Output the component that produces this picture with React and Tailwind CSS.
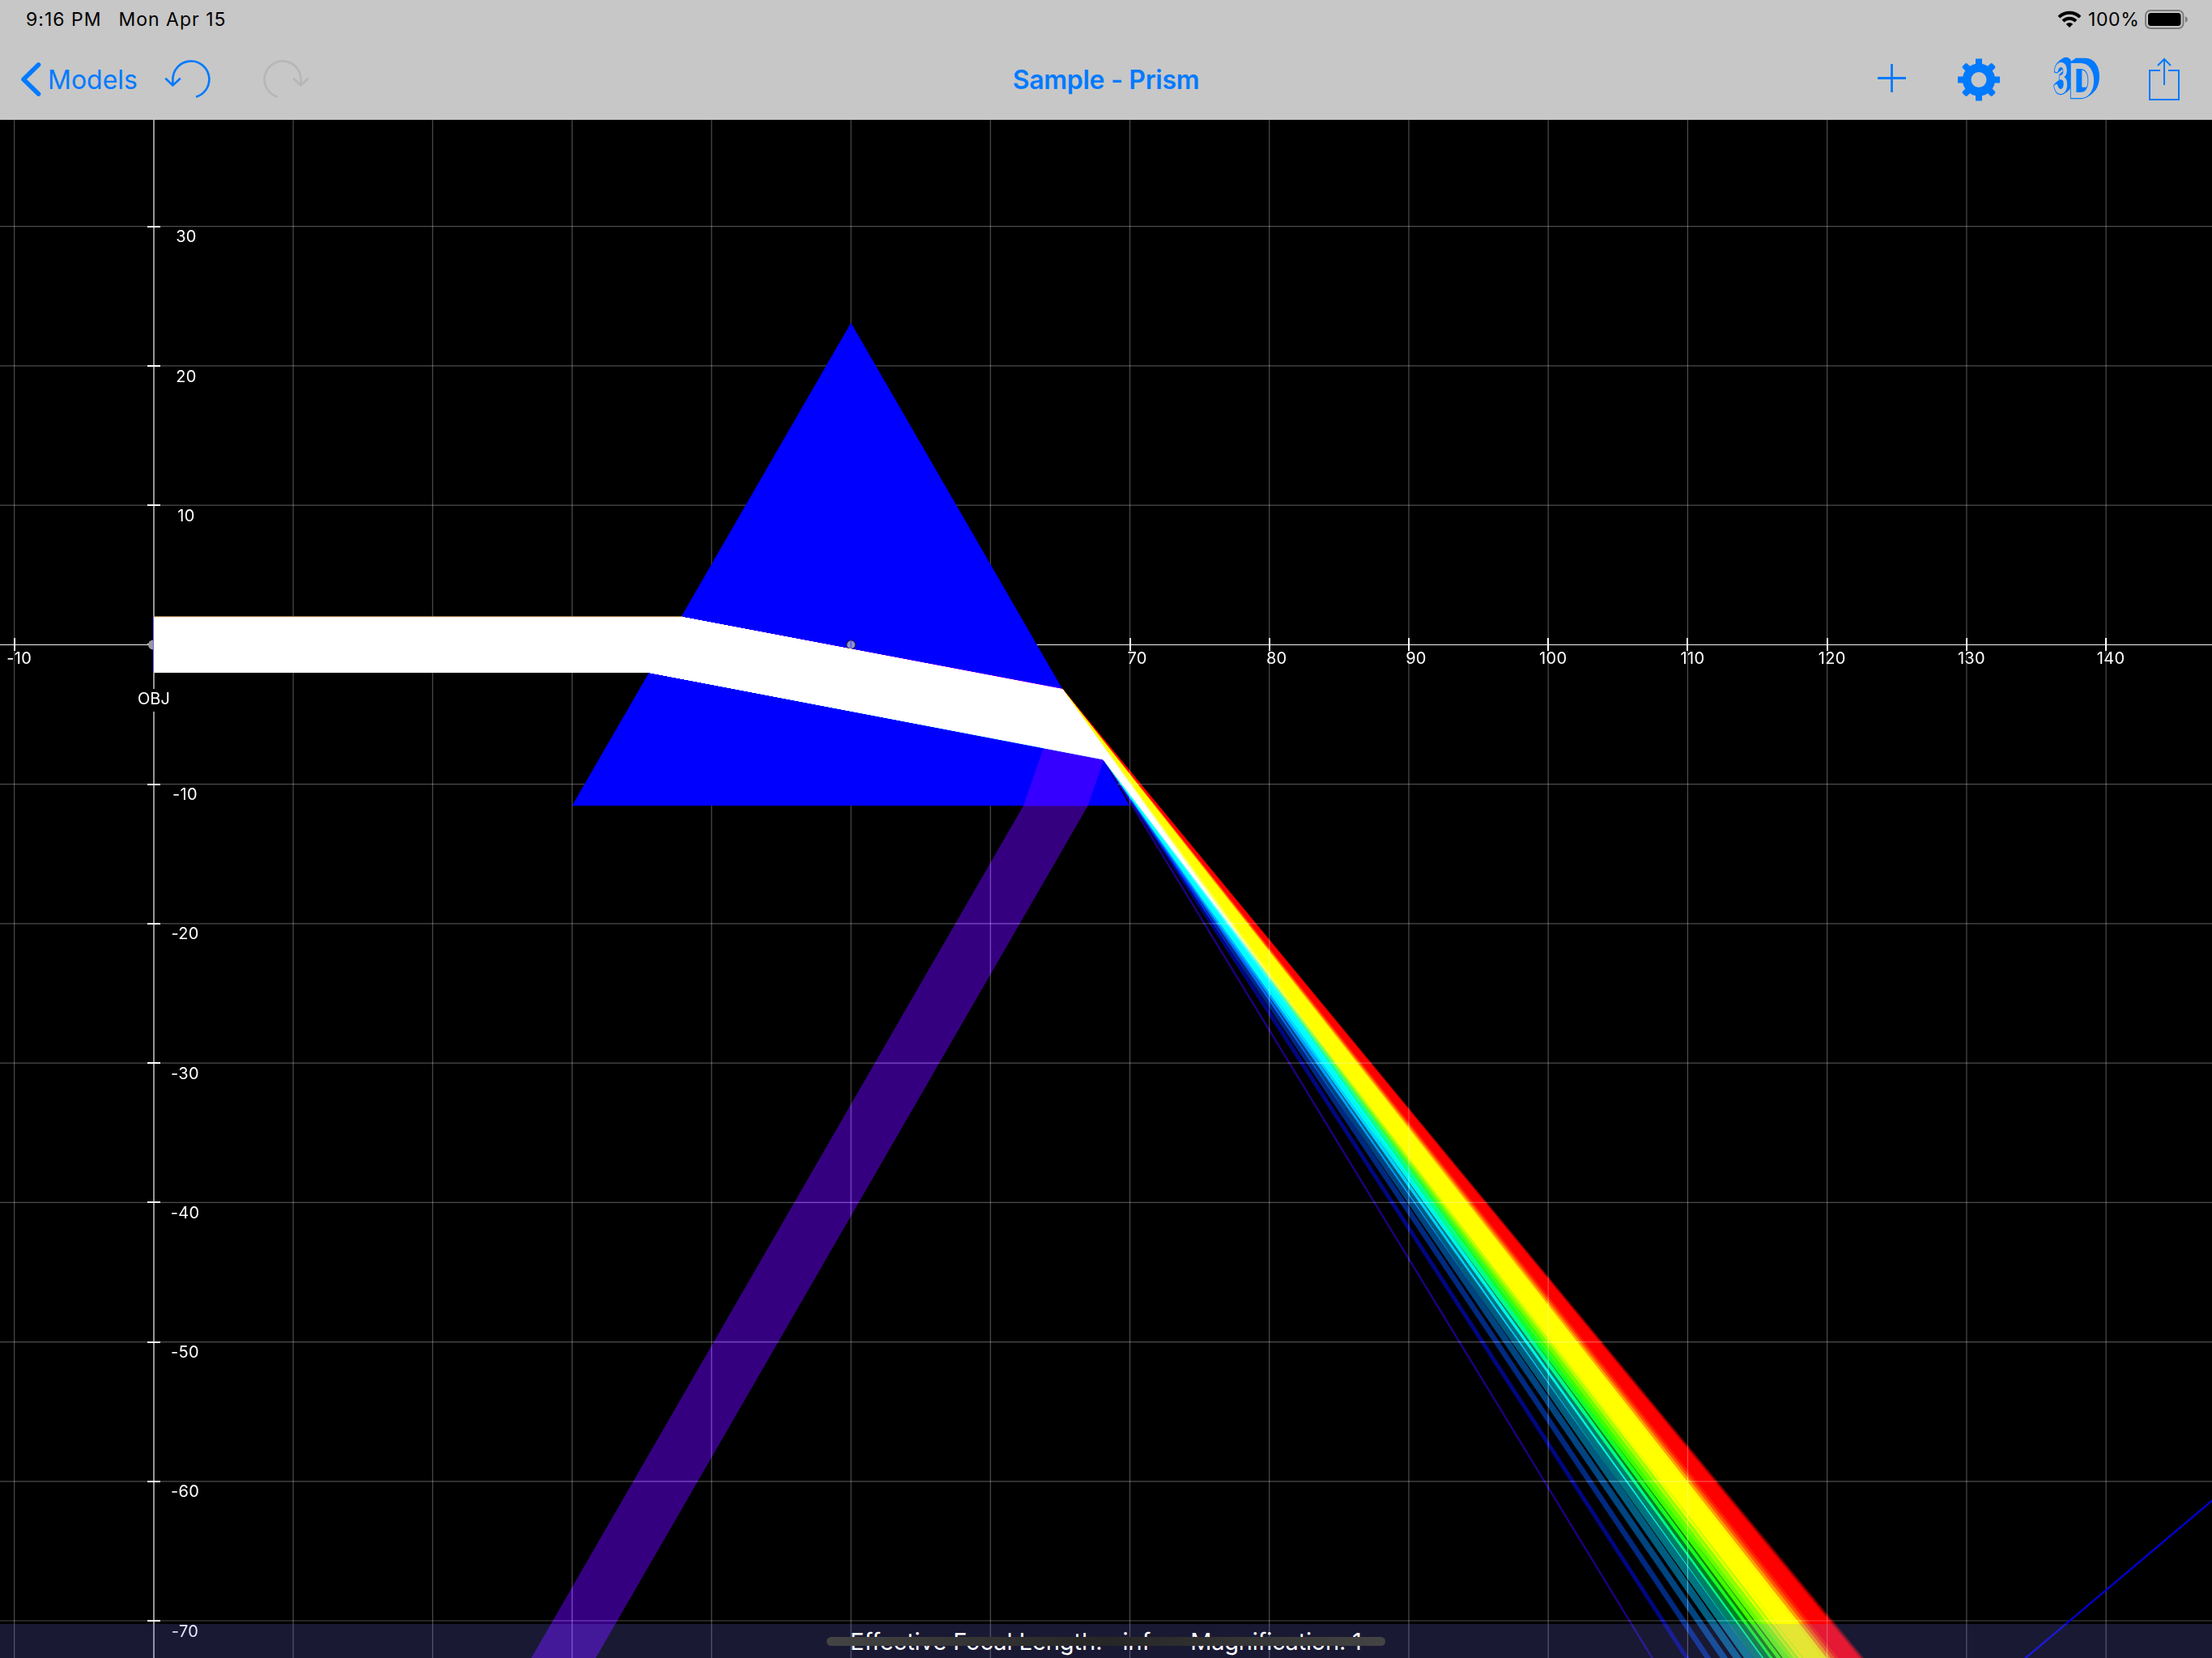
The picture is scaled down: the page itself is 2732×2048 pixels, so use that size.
import React from "react";

const UNIT = 17.223;
const X0 = 189.9;
const Y0 = 796.4;
const px = (x) => X0 + x * UNIT;
const py = (y) => Y0 - y * UNIT;

// equilateral prism, side 40, centered on (50, 0)
const APEX = [50, 23.094];
const LEFT = [30, -11.547];
const RIGHT = [70, -11.547];
const S = Math.sqrt(3) / 2;

const range = (a, b) => Array.from({ length: b - a + 1 }, (_, i) => a + i);

// Sellmeier, BK7
const glassIndex = (nm) => {
  const l = (nm / 1000) ** 2;
  return Math.sqrt(
    1 +
      (1.03961212 * l) / (l - 0.00600069867) +
      (0.231792344 * l) / (l - 0.0200179144) +
      (1.01046945 * l) / (l - 103.560653)
  );
};

const wavelengthColor = (nm) => {
  let r = 0;
  let g = 0;
  let b = 0;
  if (nm < 440) {
    r = (440 - nm) / 60;
    b = 1;
  } else if (nm < 490) {
    g = (nm - 440) / 50;
    b = 1;
  } else if (nm < 510) {
    g = 1;
    b = (510 - nm) / 20;
  } else if (nm < 580) {
    r = (nm - 510) / 70;
    g = 1;
  } else if (nm < 645) {
    r = 1;
    g = (645 - nm) / 65;
  } else {
    r = 1;
  }
  const f = nm > 700 ? 0.3 + (0.7 * (780 - nm)) / 80 : 1;
  const c = [r, g, b].map((v) => Math.round(127.5 * Math.pow(v * f, 0.8)));
  return `rgb(${c.join(",")})`;
};

// normal points against the ray, returns null on total internal reflection
const refract = (d, n, eta) => {
  const cos = -(d[0] * n[0] + d[1] * n[1]);
  const k = 1 - eta * eta * (1 - cos * cos);
  if (k < 0) return null;
  const m = eta * cos - Math.sqrt(k);
  return [eta * d[0] + m * n[0], eta * d[1] + m * n[1]];
};

const reflect = (d, n) => {
  const k = 2 * (d[0] * n[0] + d[1] * n[1]);
  return [d[0] - k * n[0], d[1] - k * n[1]];
};

const hit = (p, d, q, n) => {
  const t = ((q[0] - p[0]) * n[0] + (q[1] - p[1]) * n[1]) / (d[0] * n[0] + d[1] * n[1]);
  return [p[0] + d[0] * t, p[1] + d[1] * t];
};

const trace = (y, nm) => {
  const n = glassIndex(nm);
  const points = [[0, y]];
  const leftNormal = [-S, 0.5];
  const rightNormal = [-S, -0.5];
  let p = hit([0, y], [1, 0], LEFT, leftNormal);
  points.push(p);
  let d = refract([1, 0], leftNormal, 1 / n);
  p = hit(p, d, RIGHT, rightNormal);
  points.push(p);
  let out = refract(d, rightNormal, n);
  if (!out) {
    d = reflect(d, rightNormal);
    p = hit(p, d, LEFT, [0, 1]);
    points.push(p);
    out = refract(d, [0, 1], n);
  }
  points.push([p[0] + out[0] * 200, p[1] + out[1] * 200]);
  return points;
};

const toPoints = (pts) => pts.map(([x, y]) => `${px(x).toFixed(2)},${py(y).toFixed(2)}`).join(" ");

const WAVELENGTHS = range(0, 29).map((i) => 420 + i * 10.71);

const Beam = ({ nm }) => {
  const top = trace(2, nm);
  const bottom = trace(-2, nm);
  return range(0, top.length - 2).map((i) => (
    <polygon
      key={i}
      className="mix-blend-plus-lighter"
      fill={wavelengthColor(nm)}
      points={toPoints([top[i], top[i + 1], bottom[i + 1], bottom[i]])}
    />
  ));
};

const Diagram = () => (
  <svg
    className="block h-[1900px] w-full bg-black isolate font-['Inter',sans-serif]"
    viewBox="0 148 2732 1900"
  >
    <g stroke="#fff" strokeOpacity="0.3" strokeWidth="1.2">
      {range(-1, 14).map((i) => (
        <line key={i} x1={px(i * 10)} x2={px(i * 10)} y1="148" y2="2048" />
      ))}
      {range(-7, 3).map((i) => (
        <line key={i} x1="0" x2="2732" y1={py(i * 10)} y2={py(i * 10)} />
      ))}
    </g>
    <rect x="189" y="148" width="2" height="1900" fill="#969696" />
    <rect x="0" y="796" width="2732" height="1" fill="#e8e8e8" />
    <g fill="#fff">
      {range(-1, 14).map((i) => (
        <rect key={i} x={Math.round(px(i * 10)) - 1} y="788" width="2" height="16" />
      ))}
      {range(-7, 3).map((i) => (
        <rect key={i} x="182" y={Math.round(py(i * 10)) - 1} width="16" height="2" />
      ))}
    </g>
    <g fill="#fff" fontSize="20" textAnchor="middle" letterSpacing="0.3">
      {[-1, 7, 8, 9, 10, 11, 12, 13, 14].map((i) => (
        <text key={i} x={px(i * 10) + (i > 6 && i < 10 ? 9 : 6)} y="820">
          {i * 10}
        </text>
      ))}
      {range(-7, 3)
        .filter((i) => i !== 0)
        .map((i) => (
          <text key={i} x={i > 0 ? 230 : 228.5} y={py(i * 10) + 19.6}>
            {i * 10}
          </text>
        ))}
    </g>
    <rect x="164" y="851" width="52" height="28" fill="#000" />
    <text x="189.9" y="870" fill="#fff" fontSize="20" textAnchor="middle">
      OBJ
    </text>
    <circle cx="189" cy="796.4" r="6" fill="#999" />
    <polygon points={toPoints([APEX, RIGHT, LEFT])} fill="#00f" />
    <circle cx={px(50)} cy={Y0} r="5.5" fill="#9292d4" stroke="#1c1c50" strokeWidth="1.2" />
    <rect x="1050" y="791.5" width="2" height="10" fill="#6464d8" />
    {WAVELENGTHS.map((nm) => (
      <Beam key={nm} nm={nm} />
    ))}
    <line x1="190" x2="843" y1="761.7" y2="761.7" stroke="#c8965a" />
    <line x1="189.5" x2="189.5" y1="762" y2="831" stroke="#7a5cff" />
    <line x1="2500" x2="2734" y1="2049.5" y2="1852" stroke="#0000d0" strokeWidth="2.4" />
  </svg>
);

const Undo = ({ className }) => (
  <svg
    className={className}
    viewBox="0 0 58 50"
    fill="none"
    stroke="currentColor"
    strokeWidth="2.6"
  >
    <path d="M11.4 32V25A22.5 22.5 0 1 1 40 46.7" />
    <path d="M2.3 23.8L11.4 32.4L20.8 23.8" />
  </svg>
);

const Gear = () => (
  <svg className="h-[56px] w-[56px]" viewBox="-28 -28.5 56 56" fill="currentColor">
    {[0, 90, 180, 270].map((a) => (
      <rect key={a} x="-4" y="-26" width="8" height="12" transform={`rotate(${a})`} />
    ))}
    {[45, 135, 225, 315].map((a) => (
      <rect key={a} x="-4" y="-26" width="8" height="12" rx="2" transform={`rotate(${a})`} />
    ))}
    <circle r="14.8" fill="none" stroke="currentColor" strokeWidth="10.6" />
  </svg>
);

// light faces with the depth extruded to the upper right
const ThreeD = () => (
  <svg
    className="h-[56px] w-[60px] overflow-visible font-['Lato',sans-serif] font-black [filter:drop-shadow(1px_-0.6px_0_#007aff)_drop-shadow(2px_-1.2px_0_#007aff)_drop-shadow(3px_-1.7px_0_#007aff)]"
    viewBox="0 0 60 56"
    fill="#c7c7c7"
    stroke="#007aff"
    strokeWidth="2.6"
    strokeLinejoin="round"
    paintOrder="stroke"
  >
    <text x="2" y="46" fontSize="53" textLength="18.5" lengthAdjust="spacingAndGlyphs">
      3
    </text>
    <text x="20.5" y="51" fontSize="59" textLength="33" lengthAdjust="spacingAndGlyphs">
      D
    </text>
  </svg>
);

const StatusBar = () => (
  <div className="flex h-12 items-center justify-between pl-[32px] pr-[28px] text-[23px] text-black">
    <div className="flex gap-[21px] whitespace-nowrap tracking-[1px]">
      <span>9:16 PM</span>
      <span>Mon Apr 15</span>
    </div>
    <div className="flex items-center">
      <svg className="h-[22px] w-[30px]" viewBox="0 0 30 22" fill="none" stroke="#000" strokeWidth="4">
        <path d="M2 8.2A18.5 18.5 0 0 1 28 8.2" />
        <path d="M7 13A11.4 11.4 0 0 1 23 13" />
        <path d="M15 21L10.7 16.8A6.2 6.2 0 0 1 19.3 16.8Z" fill="#000" stroke="none" />
      </svg>
      <span className="ml-[8px] w-[70px] tracking-[0.6px]">100%</span>
      <svg className="h-[24px] w-[55px]" viewBox="0 0 55 24">
        <rect x="1" y="1" width="46.5" height="22" rx="6" fill="none" stroke="#7c7c7c" strokeWidth="2" />
        <rect x="4" y="4" width="40.5" height="16" rx="3.5" fill="#000" />
        <path d="M50 8Q53 9.5 53 12T50 16Z" fill="#7c7c7c" />
      </svg>
    </div>
  </div>
);

const NavBar = () => (
  <div className="grid h-[100px] grid-cols-3 items-center pl-6 pr-[38px] text-[#007aff]">
    <div className="flex items-center">
      <svg className="h-11 w-7" viewBox="0 0 28 44" fill="none" stroke="currentColor" strokeWidth="5.6">
        <path d="M23.5 4L5 22L23.5 40" strokeLinecap="round" strokeLinejoin="round" />
      </svg>
      <span className="ml-[7px] w-[143px] pt-px text-[32px]">Models</span>
      <Undo className="h-[50px] w-[58px]" />
      <Undo className="ml-[65px] h-[50px] w-[58px] -scale-x-100 text-[#b6b6b6]" />
    </div>
    <div className="pl-[14px] pt-px text-center text-[32px] font-semibold tracking-[-0.3px]">
      Sample - Prism
    </div>
    <div className="flex items-center justify-end">
      <svg className="h-10 w-10" viewBox="0 0 40 40" stroke="currentColor" strokeWidth="2.8">
        <path d="M3 18.5H38M20.5 1V36" />
      </svg>
      <div className="ml-[60px]">
        <Gear />
      </div>
      <div className="ml-[62px]">
        <ThreeD />
      </div>
      <svg
        className="ml-[58px] h-[56px] w-[42px]"
        viewBox="0 0 42 56"
        fill="none"
        stroke="currentColor"
        strokeWidth="2"
      >
        <path d="M16 17H3V53H39V17H26M21 35V3M13 11L21 3L29 11" />
      </svg>
    </div>
  </div>
);

export default function App() {
  return (
    <div className="relative h-[2048px] w-[2732px] overflow-hidden bg-black font-['Inter',sans-serif]">
      <header className="h-[148px] bg-[#c7c7c7]">
        <StatusBar />
        <NavBar />
      </header>
      <Diagram />
      <footer className="absolute bottom-0 left-0 flex h-[42px] w-full bg-[rgba(127,127,255,0.2)]">
        <div className="flex whitespace-pre pl-[1050px] pt-1 text-[29px] leading-[36px] tracking-[-0.05px] text-white">
          <span>Effective Focal Length:</span>
          <span className="ml-[25px]">inf</span>
          <span className="ml-[49px] tracking-[-0.2px]">Magnification: 1</span>
        </div>
        <div className="absolute left-[1021px] top-[16px] h-[11px] w-[690px] rounded-full bg-linear-to-r from-[#444444] via-[#262626] to-[#444444]" />
      </footer>
    </div>
  );
}
